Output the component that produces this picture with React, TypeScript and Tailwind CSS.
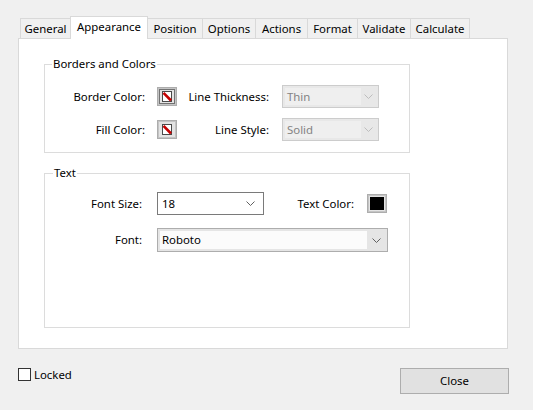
import React from "react";

function Chevron({ color }: { color: string }) {
  return (
    <svg width="9" height="5" viewBox="0 0 9 5">
      <path d="M0.5 0.5 L4.5 4.5 L8.5 0.5" fill="none" stroke={color} strokeWidth="1" />
    </svg>
  );
}

function ColorSwatch({ focused }: { focused?: boolean }) {
  return (
    <svg width="20" height="19" viewBox="0 0 20 19">
      <rect x="0" y="0" width="20" height="19" fill="#adadad" />
      <rect x="1" y="1" width="18" height="17" fill="#c4c4c4" />
      <rect x="2" y="2" width="16" height="15" fill="#e3e3e3" />
      {focused && (
        <rect x="2.5" y="2.5" width="15" height="14" fill="none" stroke="#000" strokeWidth="1" strokeDasharray="1 1" />
      )}
      <rect x="5.5" y="4.5" width="9" height="10" fill="#ffffff" stroke="#4a4a4a" strokeWidth="1" />
      <path d="M6.5 5.8 L14 13.5" stroke="#c40000" strokeWidth="2.6" />
    </svg>
  );
}

function BlackSwatch() {
  return (
    <svg width="20" height="19" viewBox="0 0 20 19">
      <rect x="0" y="0" width="20" height="19" fill="#adadad" />
      <rect x="1" y="1" width="18" height="17" fill="#c4c4c4" />
      <rect x="2" y="2" width="16" height="15" fill="#e3e3e3" />
      <rect x="3" y="3" width="14" height="13" fill="#000000" />
    </svg>
  );
}

function DisabledSelect({ value }: { value: string }) {
  return (
    <div className="flex h-[23px] w-[97px] border border-[#cccccc] bg-[#e8e8e8] p-[2px]">
      <div className="flex flex-1 items-center bg-[#efefef] pl-[2px] text-[#838383]">{value}</div>
      <div className="flex w-[15px] items-center justify-center">
        <Chevron color="#bdbdbd" />
      </div>
    </div>
  );
}

const tabs = ["General", "Appearance", "Position", "Options", "Actions", "Format", "Validate", "Calculate"];
const widths: Record<string, string> = {
  General: "w-[50px]",
  Appearance: "w-[78px]",
  Position: "w-[54px]",
  Options: "w-[53px]",
  Actions: "w-[52px]",
  Format: "w-[50px]",
  Validate: "w-[53px]",
  Calculate: "w-[60px]",
};

export default function App() {
  return (
    <div className="h-[410px] w-[533px] overflow-hidden bg-[#f0f0f0] pl-[18px] pt-[16px] font-['Noto_Sans',sans-serif] text-[11.4px] leading-[16px] text-black">
      {/* Tabs */}
      <div className="ml-[2px] flex h-[22px] items-end">
        {tabs.map((t, i) => {
          const selected = t === "Appearance";
          const afterSelected = tabs[i - 1] === "Appearance";
          const last = i === tabs.length - 1;
          if (selected) {
            return (
              <div
                key={t}
                className={`relative z-10 -mb-px flex h-[23px] items-center justify-center border-x border-t border-[#d9d9d9] bg-white pb-[2px] ${widths[t]}`}
              >
                {t}
              </div>
            );
          }
          return (
            <div
              key={t}
              className={`flex h-[20px] items-center justify-center border-t border-[#d9d9d9] bg-[#f0f0f0] pt-px ${widths[t]} ${afterSelected ? "" : "border-l"} ${last ? "border-r" : ""}`}
            >
              {t}
            </div>
          );
        })}
      </div>

      {/* Panel */}
      <div className="h-[311px] w-[490px] border border-[#d9d9d9] bg-white pl-[25px] pt-[25px]">
        {/* Borders and Colors */}
        <div className="h-[89px] w-[366px] border border-[#dcdcdc]">
          <div className="-mt-[9px] ml-[7px] w-fit bg-white px-[1px] leading-[16px]">Borders and Colors</div>
          <div className="mt-[13px] flex flex-col gap-[10px]">
            <div className="flex h-[23px] items-center">
              <div className="w-[100px] text-right">Border Color:</div>
              <div className="ml-[12px] flex">
                <ColorSwatch focused />
              </div>
              <div className="w-[92px] text-right">Line Thickness:</div>
              <div className="ml-[13px]">
                <DisabledSelect value="Thin" />
              </div>
            </div>
            <div className="flex h-[23px] items-center">
              <div className="w-[100px] text-right">Fill Color:</div>
              <div className="ml-[12px] flex">
                <ColorSwatch />
              </div>
              <div className="w-[92px] text-right">Line Style:</div>
              <div className="ml-[13px]">
                <DisabledSelect value="Solid" />
              </div>
            </div>
          </div>
        </div>

        {/* Text */}
        <div className="mt-[20px] h-[155px] w-[366px] border border-[#dcdcdc]">
          <div className="-mt-[9px] ml-[8px] w-fit bg-white px-[1px] leading-[16px]">Text</div>
          <div className="mt-[11px] flex h-[23px] items-center">
            <div className="w-[97px] text-right">Font Size:</div>
            <div className="ml-[15px] flex h-[23px] w-[107px] items-center border border-[#7a7a7a] bg-white">
              <div className="flex-1 pl-[4px]">18</div>
              <div className="flex w-[22px] items-center justify-center pr-[4px]">
                <Chevron color="#606060" />
              </div>
            </div>
            <div className="w-[90px] text-right">Text Color:</div>
            <div className="ml-[13px] flex">
              <BlackSwatch />
            </div>
          </div>
          <div className="mt-[13px] flex h-[24px] items-center">
            <div className="w-[97px] text-right">Font:</div>
            <div className="ml-[15px] flex h-[24px] w-[231px] border border-[#adadad] bg-[#e5e5e5] p-[2px]">
              <div className="flex flex-1 items-center bg-[#fbfbfb] pl-[2px]">Roboto</div>
              <div className="flex w-[18px] items-center justify-center">
                <Chevron color="#606060" />
              </div>
            </div>
          </div>
        </div>
      </div>

      {/* Bottom row */}
      <div className="mt-[19px] flex w-[491px] items-start justify-between">
        <div className="flex items-center gap-[3px]">
          <div className="h-[13px] w-[13px] border border-[#333333] bg-white" />
          <span className="leading-[13px]">Locked</span>
        </div>
        <div className="flex h-[26px] w-[109px] items-center justify-center border border-[#adadad] bg-[#e1e1e1]">
          Close
        </div>
      </div>
    </div>
  );
}
